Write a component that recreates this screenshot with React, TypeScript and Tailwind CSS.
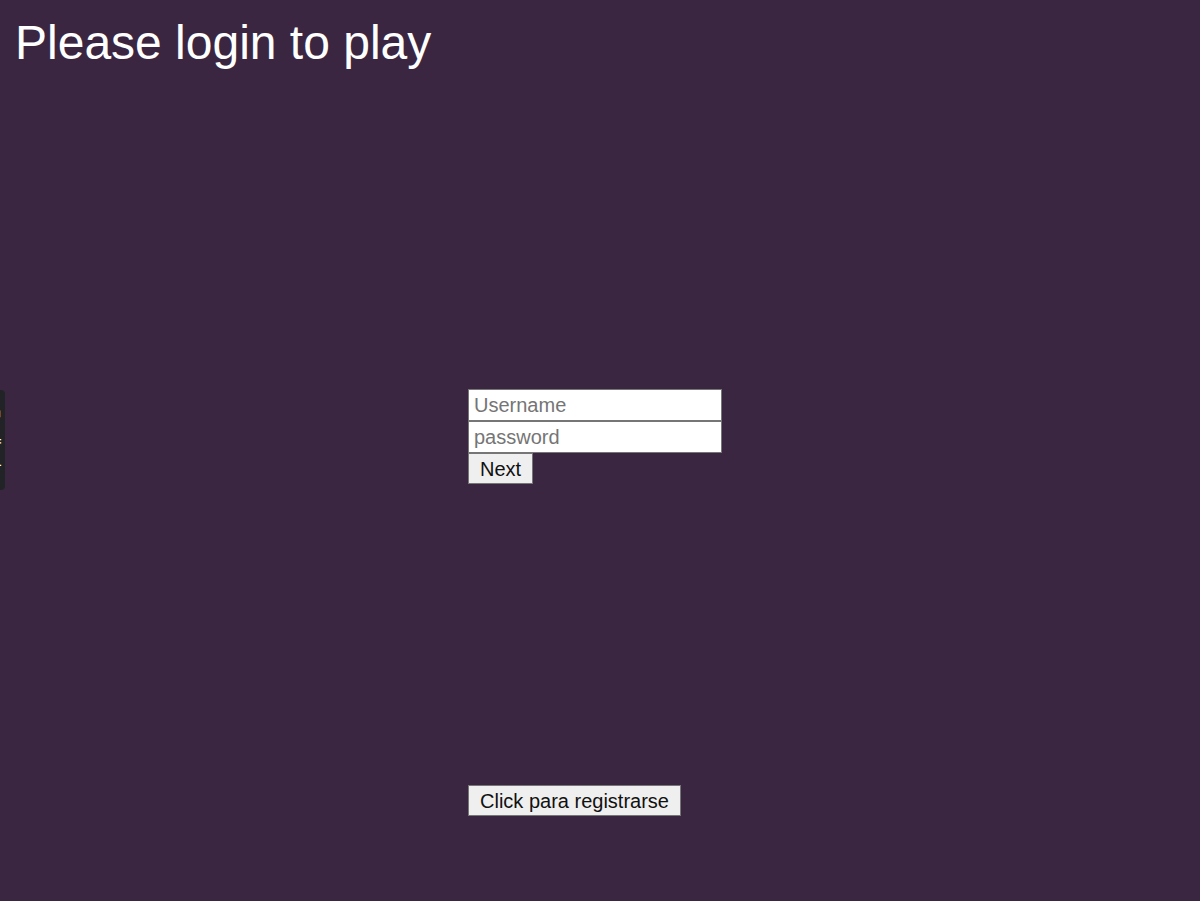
export default function App() {
  return (
    <div className="relative min-h-[901px] w-full overflow-hidden bg-[#3b2642] font-['Liberation_Sans',Arial,sans-serif]">
      <h1 className="pl-[15px] pt-[19px] text-[48px] leading-none text-white">Please login to play</h1>

      <div className="ml-[468px] mt-[322px] flex w-[254px] flex-col">
        <input
          type="text"
          placeholder="Username"
          className="h-[32px] w-[254px] border border-[#767676] bg-white px-[5px] text-[20px] text-black outline-none placeholder:text-[#757575]"
        />
        <input
          type="password"
          placeholder="password"
          className="h-[32px] w-[254px] border border-[#767676] bg-white px-[5px] text-[20px] text-black outline-none placeholder:text-[#757575]"
        />
        <div>
          <button className="h-[31px] border border-[#767676] bg-[#efefef] px-[11px] text-[20px] leading-none text-[#111]">
            Next
          </button>
        </div>
      </div>

      <div className="ml-[468px] mt-[301px]">
        <button className="h-[31px] border border-[#767676] bg-[#efefef] px-[11px] text-[20px] leading-none text-[#111]">
          Click para registrarse
        </button>
      </div>

      {/* side tab, mostly off screen */}
      <div className="absolute left-[-15px] top-[390px] flex h-[100px] w-[20px] items-center justify-center rounded-r-[4px] bg-[#222326]">
        <span className="rotate-90 whitespace-nowrap text-[14px] leading-none text-white">Feedback</span>
      </div>
    </div>
  );
}
